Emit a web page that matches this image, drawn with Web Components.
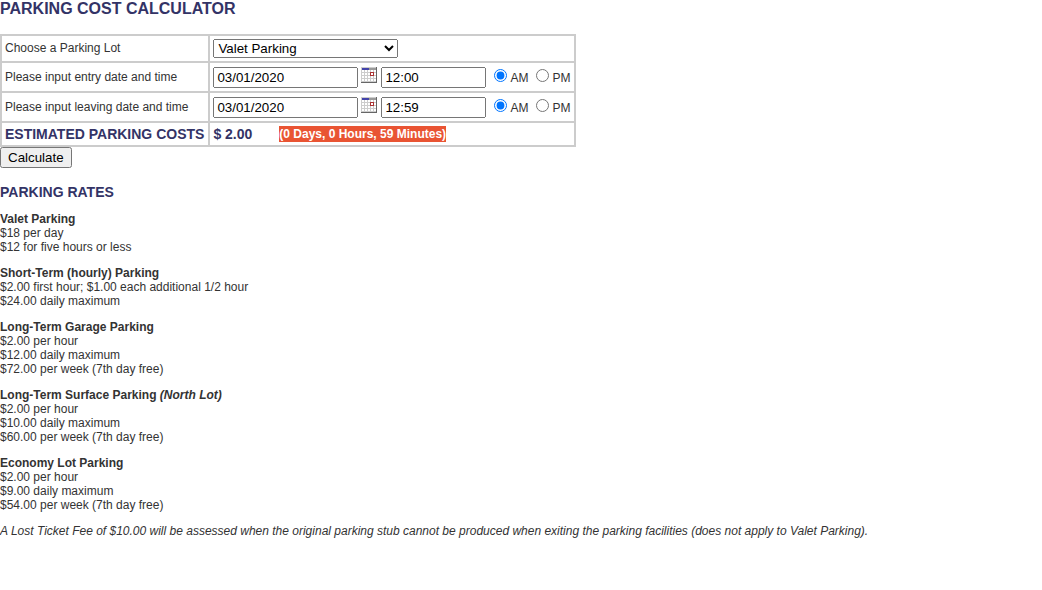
<!DOCTYPE html>
<html lang="en">
<head>
<meta charset="utf-8">
<title>Parking Cost Calculator</title>
<style>
body { margin: 0; background: #fff; color: #333; font: 12px/14px "Liberation Sans", Arial, sans-serif; }
</style>
</head>
<body>
<parking-page></parking-page>

<template id="page-template">
  <style>
    :host { display: block; }
    h1 { margin: 0 0 16px; font-size: 16px; line-height: 18px; color: #336; }
    h2 { margin: 16px 0 12px; font-size: 14px; line-height: 16px; color: #336; }
    .fee { margin: 12px 0; }
  </style>
  <main>
    <h1>PARKING COST CALCULATOR</h1>
    <cost-form></cost-form>
    <h2>PARKING RATES</h2>
    <rate-card>
      <span slot="name">Valet Parking</span>
      <div>$18 per day</div>
      <div>$12 for five hours or less</div>
    </rate-card>
    <rate-card>
      <span slot="name">Short-Term (hourly) Parking</span>
      <div>$2.00 first hour; $1.00 each additional 1/2 hour</div>
      <div>$24.00 daily maximum</div>
    </rate-card>
    <rate-card>
      <span slot="name">Long-Term Garage Parking</span>
      <div>$2.00 per hour</div>
      <div>$12.00 daily maximum</div>
      <div>$72.00 per week (7th day free)</div>
    </rate-card>
    <rate-card>
      <span slot="name">Long-Term Surface Parking <em>(North Lot)</em></span>
      <div>$2.00 per hour</div>
      <div>$10.00 daily maximum</div>
      <div>$60.00 per week (7th day free)</div>
    </rate-card>
    <rate-card>
      <span slot="name">Economy Lot Parking</span>
      <div>$2.00 per hour</div>
      <div>$9.00 daily maximum</div>
      <div>$54.00 per week (7th day free)</div>
    </rate-card>
    <p class="fee"><em>A Lost Ticket Fee of $10.00 will be assessed when the original parking stub cannot be produced when exiting the parking facilities (does not apply to Valet Parking).</em></p>
  </main>
</template>

<template id="form-template">
  <style>
    :host { display: block; }
    form { margin: 0; }
    table { border-collapse: collapse; font-size: 12px; line-height: 14px; }
    td, th { border: 2px solid #ccc; padding: 3px 4px 3px 3px; text-align: left; font-weight: normal; white-space: nowrap; }
    th { padding-bottom: 4px; }
    select { display: block; box-sizing: border-box; width: 185px; height: 19px; margin: 0; font-family: "Liberation Sans", Arial, sans-serif; }
    button { display: block; box-sizing: border-box; height: 21px; margin: 0; padding: 1px 6px; font-family: "Liberation Sans", Arial, sans-serif; }
    .total { padding-bottom: 3px; font-size: 14px; line-height: 16px; font-weight: bold; color: #336; }
    .result { display: flex; gap: 27px; }
    mark { background: #e95433; color: #fff; font-size: 12px; }
  </style>
  <form>
    <table>
      <tr>
        <th scope="row"><label for="lot">Choose a Parking Lot</label></th>
        <td>
          <select id="lot">
            <option>Valet Parking</option>
            <option>Short-Term Parking</option>
            <option>Economy Parking</option>
            <option>Long-Term Garage Parking</option>
            <option>Long-Term Surface Parking</option>
          </select>
        </td>
      </tr>
      <tr>
        <th scope="row">Please input entry date and time</th>
        <td><date-time-field label="Entry" date="03/01/2020" time="12:00"></date-time-field></td>
      </tr>
      <tr>
        <th scope="row">Please input leaving date and time</th>
        <td><date-time-field label="Leaving" date="03/01/2020" time="12:59"></date-time-field></td>
      </tr>
      <tr>
        <th scope="row" class="total">ESTIMATED PARKING COSTS</th>
        <td class="total"><div class="result"><span>$ 2.00</span><mark>(0 Days, 0 Hours, 59 Minutes)</mark></div></td>
      </tr>
    </table>
    <button type="button">Calculate</button>
  </form>
</template>

<template id="field-template">
  <style>
    :host { display: flex; align-items: flex-start; padding-top: 1px; }
    input[type=text] { box-sizing: border-box; height: 21px; margin: 0; padding: 1px 2px; font-family: "Liberation Sans", Arial, sans-serif; }
    .date { width: 145px; }
    .time { width: 105px; }
    a { display: block; height: 16px; margin: 0 4px 0 3px; }
    svg { display: block; }
    label { display: flex; align-items: flex-start; gap: 3px; margin-left: 8px; }
    label span { margin-top: 4px; }
    input[type=radio] { width: 13px; height: 13px; margin: 2px 0 0; }
  </style>
  <input class="date" type="text">
  <a href="#" aria-label="Pick a date">
    <svg width="16" height="16" viewBox="0 0 16 16" shape-rendering="crispEdges" aria-hidden="true">
      <path fill="#ccc" d="M0 0h16v16H0z"/>
      <path fill="#fff" d="M1 3h2v2H1zM4 3h2v2H4zM7 3h2v2H7zM10 3h2v2h-2zM13 3h2v2h-2zM1 6h2v2H1zM4 6h2v2H4zM7 6h2v2H7zM13 6h2v2h-2zM1 9h2v2H1zM4 9h2v2H4zM7 9h2v2H7zM10 9h2v2h-2zM13 9h2v2h-2zM1 12h2v2H1zM4 12h2v2H4zM7 12h2v2H7zM10 12h2v2h-2zM13 12h2v2h-2z"/>
      <path fill="#999" d="M8 1h7v2H8z"/>
      <path fill="#44a" d="M1 1h7v2H1z"/>
      <path fill="#a33" d="M9 5h4v4H9z"/>
      <path fill="#fff" d="M10 6h2v2h-2z"/>
      <path fill="#666" d="M15 0h1v16H0v-1h15z"/>
    </svg>
  </a>
  <input class="time" type="text">
  <label><input type="radio" name="half" checked><span>AM</span></label>
  <label><input type="radio" name="half"><span>PM</span></label>
</template>

<template id="rate-template">
  <style>
    :host { display: block; margin-bottom: 12px; }
    .name { font-weight: bold; }
  </style>
  <div class="name"><slot name="name"></slot></div>
  <slot></slot>
</template>

<script>
class TemplateElement extends HTMLElement {
  constructor() {
    super();
    const template = document.getElementById(this.constructor.template);
    this.attachShadow({ mode: 'open' }).append(template.content.cloneNode(true));
  }
}
class RateCard extends TemplateElement { static template = 'rate-template'; }
class DateTimeField extends TemplateElement {
  static template = 'field-template';
  connectedCallback() {
    const label = this.getAttribute('label');
    for (const part of ['date', 'time']) {
      const input = this.shadowRoot.querySelector('.' + part);
      input.value = this.getAttribute(part);
      input.setAttribute('aria-label', label + ' ' + part);
    }
  }
}
class CostForm extends TemplateElement { static template = 'form-template'; }
class ParkingPage extends TemplateElement { static template = 'page-template'; }
customElements.define('rate-card', RateCard);
customElements.define('date-time-field', DateTimeField);
customElements.define('cost-form', CostForm);
customElements.define('parking-page', ParkingPage);
</script>
</body>
</html>
